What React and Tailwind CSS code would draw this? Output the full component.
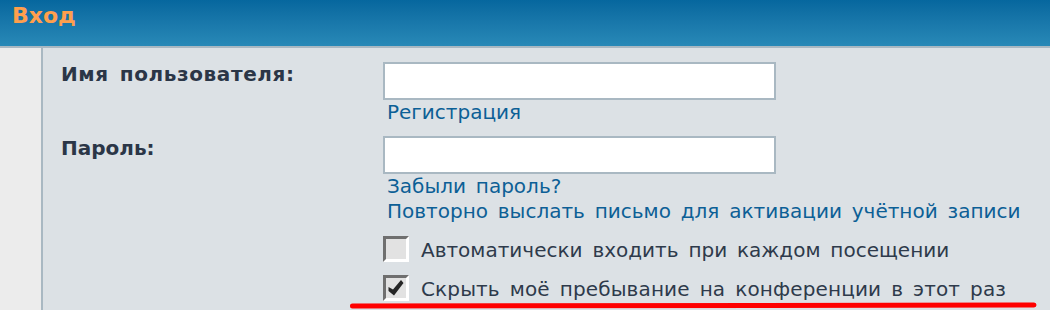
import React from "react";

function Box({ checked }) {
  return (
    <div className="w-[26px] h-[26px] border-[3px] border-t-[#6f6f6f] border-l-[#6f6f6f] border-b-white border-r-white bg-[#e2e2e2] flex items-center justify-center shrink-0">
      {checked && (
        <svg width="18" height="18" viewBox="0 0 18 18">
          <path d="M1.5 8 L6 10.5 L14 1 L16.5 4 L7 16.5 L1.5 12 Z" fill="#262626" />
        </svg>
      )}
    </div>
  );
}

export default function App() {
  return (
    <div className="relative w-[1050px] h-[310px] overflow-hidden bg-[#dce1e5] font-['DejaVu_Sans',sans-serif]">
      <div className="h-[48px] bg-gradient-to-b from-[#06679e] to-[#2889b7] border-b-2 border-[#a9b8c2] pl-[12px] pt-[3px]">
        <span className="text-[22px] leading-[26px] font-bold text-[#ff9f4d]">Вход</span>
      </div>
      <div className="flex h-[262px]">
        <div className="w-[43px] bg-[#ececec] border-r-2 border-[#a9b8c2] shrink-0" />
        <div className="flex-1 pl-[18px] pt-[14px] text-[20px] leading-[25px] [word-spacing:3.5px]">
          <div className="grid grid-cols-[322px_1fr]">
            <div className="font-bold text-[#2b3647] tracking-[0.6px]">Имя пользователя:</div>
            <div className="flex flex-col">
              <div className="w-[393px] h-[38px] border-2 border-[#a9b8c2] bg-white" />
              <span className="pl-[4px] text-[#0c5f96]">Регистрация</span>
            </div>
          </div>
          <div className="grid grid-cols-[322px_1fr] mt-[11px]">
            <div className="font-bold text-[#2b3647]">Пароль:</div>
            <div className="flex flex-col">
              <div className="w-[393px] h-[38px] border-2 border-[#a9b8c2] bg-white" />
              <span className="pl-[4px] text-[#0c5f96]">Забыли пароль?</span>
              <span className="pl-[4px] text-[#0c5f96]">Повторно выслать письмо для активации учётной записи</span>
              <div className="flex items-center gap-[12px] mt-[11px] text-[#2e3a4b]">
                <Box />
                <span className="pt-[3px]">Автоматически входить при каждом посещении</span>
              </div>
              <div className="flex items-center gap-[12px] mt-[11px] text-[#2e3a4b]">
                <Box checked />
                <span className="pt-[3px] tracking-[0.13px]">Скрыть моё пребывание на конференции в этот раз</span>
              </div>
            </div>
          </div>
        </div>
      </div>
      <svg className="absolute left-0 top-0 pointer-events-none" width="1050" height="310">
        <path d="M352.5 306 Q 700 305 1034 305" stroke="#ff0000" strokeWidth="5" strokeLinecap="round" fill="none" />
      </svg>
    </div>
  );
}
